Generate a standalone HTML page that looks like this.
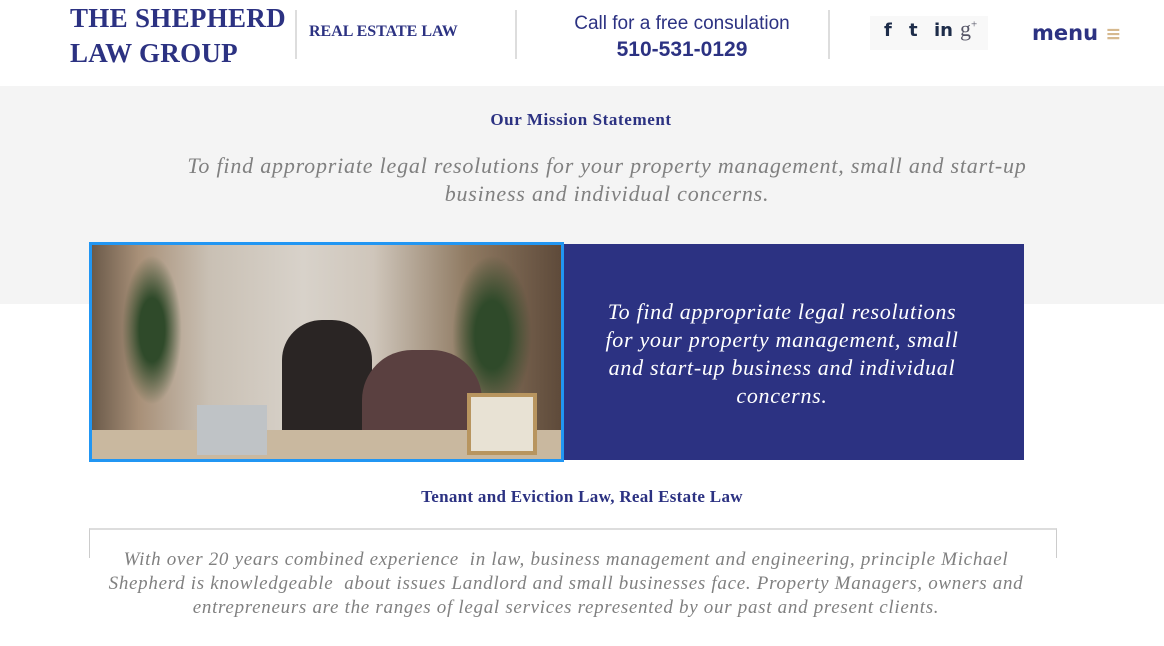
<!DOCTYPE html>
<html><head><style>
*{margin:0;padding:0;box-sizing:border-box}
body{width:1164px;height:646px;background:#fff;position:relative;overflow:hidden;font-family:"Liberation Serif",serif}
.a{position:absolute}
.navy{color:#2c3282}
.sep{position:absolute;width:2px;background:#ddd}
.it{font-style:italic;color:#808080}
</style></head><body>
<div class="a navy" style="left:70px;top:1px;font-size:27px;font-weight:bold;line-height:35px;letter-spacing:0.3px">THE SHEPHERD<br>LAW GROUP</div>
<div class="sep" style="left:295px;top:10px;height:49px"></div>
<div class="a navy" style="left:309px;top:23px;font-size:16px;font-weight:bold">REAL ESTATE LAW</div>
<div class="sep" style="left:515px;top:10px;height:49px"></div>
<div class="a navy" style="left:520px;top:11px;width:324px;text-align:center;font-family:'Liberation Sans',sans-serif;font-size:19px;line-height:26px">Call for a free consulation<br><b style="font-size:21px">510-531-0129</b></div>
<div class="sep" style="left:828px;top:10px;height:49px"></div>
<div class="a" style="left:870px;top:16px;width:118px;height:34px;background:#f8f8f8"></div>
<div class="a" style="left:884px;top:20px;font-family:'DejaVu Sans',sans-serif;font-weight:bold;font-size:18px;color:#1e2d4a">f</div>
<div class="a" style="left:909px;top:20px;font-family:'DejaVu Sans',sans-serif;font-weight:bold;font-size:18px;color:#1e2d4a">t</div>
<div class="a" style="left:934px;top:20px;font-family:'DejaVu Sans',sans-serif;font-weight:bold;font-size:18px;color:#1e2d4a">in</div>
<div class="a" style="left:960px;top:16px;font-size:22px;color:#556">g<sup style="font-size:11px">+</sup></div>
<div class="a" style="left:1032px;top:21px;font-family:'DejaVu Sans',sans-serif;font-weight:bold;font-size:21px;color:#2c3282">menu <span style="color:#d6b98f;font-size:19px">≡</span></div>
<div class="a" style="left:0;top:86px;width:1164px;height:218px;background:#f4f4f4"></div>
<div class="a navy" style="left:0;top:110px;width:1164px;text-align:center;font-weight:bold;font-size:17px;letter-spacing:0.6px;padding-right:2px">Our Mission Statement</div>
<div class="a it" style="left:162px;top:152px;width:890px;text-align:center;font-size:22px;line-height:28px;letter-spacing:0.8px">To find appropriate legal resolutions for your property management, small and start-up business and individual concerns.</div>
<div class="a" style="left:89px;top:242px;width:475px;height:220px;border:3px solid #2196f3;background:linear-gradient(90deg,#6b5a4a 0%,#a89078 10%,#c9c0b4 25%,#d8d2ca 45%,#cfc6bb 60%,#8f7a62 80%,#5e4a3a 100%);overflow:hidden">
 <div class="a" style="left:30px;top:10px;width:60px;height:150px;background:radial-gradient(ellipse,#2f4a2a 30%,transparent 70%)"></div>
 <div class="a" style="left:360px;top:10px;width:80px;height:160px;background:radial-gradient(ellipse,#2f4a2a 30%,transparent 70%)"></div>
 <div class="a" style="left:190px;top:75px;width:90px;height:140px;background:#2a2524;border-radius:40px 40px 0 0"></div>
 <div class="a" style="left:270px;top:105px;width:120px;height:110px;background:#5a4040;border-radius:50px 50px 0 0"></div>
 <div class="a" style="left:0;top:185px;width:475px;height:35px;background:#c9b89f"></div>
 <div class="a" style="left:105px;top:160px;width:70px;height:50px;background:#bfc3c6"></div>
 <div class="a" style="left:375px;top:148px;width:70px;height:62px;background:#e8e2d4;border:4px solid #b8955f"></div>
</div>
<div class="a" style="left:564px;top:244px;width:460px;height:216px;background:#2c3282"></div>
<div class="a" style="left:592px;top:298px;width:380px;text-align:center;font-style:italic;color:#fff;font-size:22px;line-height:28px;letter-spacing:0.7px">To find appropriate legal resolutions for your property management, small and start-up business and individual concerns.</div>
<div class="a navy" style="left:0;top:487px;width:1164px;text-align:center;font-weight:bold;font-size:17px;letter-spacing:0.3px">Tenant and Eviction Law, Real Estate Law</div>
<div class="a" style="left:89px;top:528px;width:968px;height:30px;border-top:2px solid #ddd;border-left:1px solid #ccc;border-right:1px solid #ccc"></div>
<div class="a it" style="left:104px;top:548px;width:924px;text-align:center;font-size:19px;line-height:24px;letter-spacing:0.7px">With over 20 years combined experience&nbsp; in law, business management and engineering, principle Michael Shepherd is knowledgeable&nbsp; about issues Landlord and small businesses face. Property Managers, owners and entrepreneurs are the ranges of legal services represented by our past and present clients.</div>
</body></html>
